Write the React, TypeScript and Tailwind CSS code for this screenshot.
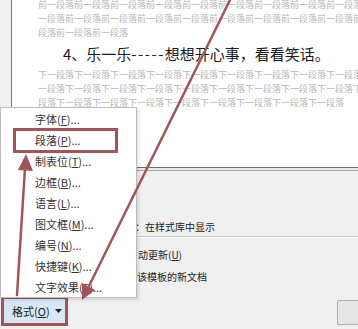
import React from "react";

const prevRows = ["前一段落".repeat(10), "一段落前".repeat(10), "段落前一段落前一段落"];
const nextRows = [
  "下一段落".repeat(10),
  "一段落下".repeat(10),
  "段落下一段落下一段落下一段落下一段落下一段落下一段落下一段落下一段落",
];

const menuItems = [
  { label: "字体", key: "F" },
  { label: "段落", key: "P" },
  { label: "制表位", key: "T" },
  { label: "边框", key: "B" },
  { label: "语言", key: "L" },
  { label: "图文框", key: "M" },
  { label: "编号", key: "N" },
  { label: "快捷键", key: "K" },
  { label: "文字效果", key: "E" },
];

const PreviewRow: React.FC<{ text: string }> = ({ text }) => (
  <div className="h-[14px] whitespace-nowrap pl-[26px] text-[9px] leading-[14px] text-[#b8b8b8]">{text}</div>
);

export default function App() {
  return (
    <div className="relative h-[329px] w-[358px] overflow-hidden bg-[#f0f0f0] font-['Noto_Sans_CJK_SC','Noto_Sans',sans-serif] text-[#222]">
      {/* preview */}
      <div className="ml-[11px] h-[167px] overflow-hidden border-l border-[#7c7c7c] bg-white">
        <div className="mt-[-2px]">
          {prevRows.map((r, i) => (
            <PreviewRow key={i} text={r} />
          ))}
        </div>
        <div className="flex h-[28px] items-center whitespace-nowrap pl-[51px] text-[15px] text-[#1a1a1a]">
          4、乐一乐<span className="tracking-[1.5px]">-----</span>想想开心事，看看笑话。
        </div>
        <div>
          {nextRows.map((r, i) => (
            <PreviewRow key={i} text={r} />
          ))}
        </div>
      </div>
      <div className="h-px bg-[#6e6e6e]" />
      <div className="h-[2px] bg-[#e8e8e8]" />
      <div className="h-px bg-[#a8a8a8]" />

      {/* options (left part lies under the menu) */}
      <div className="flex h-[65px] items-end pb-[2px] pl-[135px] text-[10px] leading-[14px] text-[#222]">
        ：在样式库中显示
      </div>
      <div className="h-px bg-[#c8c8c8]" />
      <div className="h-px bg-white" />
      <div className="mt-[6px] flex h-[20px] items-center pl-[138px] text-[10px] text-[#222]">
        动更新(<span className="underline">U</span>)
      </div>
      <div className="mt-[2px] flex h-[20px] items-center pl-[137px] text-[10px] text-[#222]">
        该模板的新文档
      </div>

      {/* bottom buttons */}
      <div className="mt-[10px] flex items-start pl-[1px]">
        <div className="flex h-[30px] w-[67px] items-center gap-[5px] border-[3px] border-[#a3545b] bg-[#d8e7f6] pl-[8px] text-[11px] text-[#1a1a1a]">
          <span>
            格式(<span className="underline">O</span>)
          </span>
          <svg width="7" height="4" viewBox="0 0 7 4">
            <path d="M0 0H7L3.5 4Z" fill="#222" />
          </svg>
        </div>
        <div className="ml-auto mr-[-60px] mt-[4px] h-[25px] w-[81px] rounded-[2px] border border-[#adadad] bg-[#e6e6e6]" />
      </div>

      {/* context menu */}
      <div className="absolute left-0 top-[107px] h-[191px] w-[137px] border border-[#bcbcbc] bg-white pt-px shadow-[2px_2px_3px_rgba(0,0,0,0.12)]">
        {menuItems.map((m) => (
          <div key={m.key} className="flex h-[21px] items-center pl-[34px] text-[11px] text-[#333]">
            {m.label}(<span className="underline">{m.key}</span>)...
          </div>
        ))}
      </div>
      <div className="absolute left-[13px] top-[128px] h-[25px] w-[105px] border-[3px] border-[#a3545b]" />

      {/* annotation arrows */}
      <svg className="pointer-events-none absolute inset-0" width="358" height="329" viewBox="0 0 358 329">
        <g stroke="#a3545b" strokeWidth="2.5" strokeLinecap="round" fill="none">
          <line x1="17" y1="295" x2="25" y2="168" />
          <line x1="231" y1="-2" x2="89" y2="286" />
        </g>
        <g fill="#a3545b">
          <polygon points="26,154 33,171 18,170" />
          <polygon points="82,300 95,290 82,283" />
        </g>
      </svg>
    </div>
  );
}
